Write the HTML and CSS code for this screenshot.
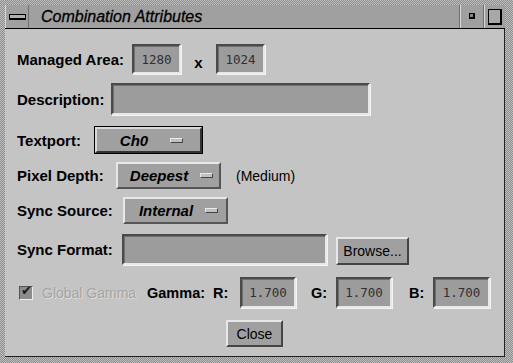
FILE: index.html
```html
<!DOCTYPE html>
<html lang="en">
<head>
  <meta charset="UTF-8">
  <title>Combination Attributes</title>
  <link rel="stylesheet" href="styles.css">
</head>
<body>
  <div class="window">
    <!-- Title bar -->
    <div class="titlebar">
      <div class="tb-btn tb-menu"><span class="menu-bar"></span></div>
      <div class="tb-title">Combination Attributes</div>
      <div class="tb-btn tb-min"><span class="dot"></span></div>
      <div class="tb-btn tb-max"><span class="square"></span></div>
    </div>

    <div class="content">
      <div class="row row-area">
        <span class="label" style="width:115px">Managed Area:</span>
        <span class="field w49">1280</span>
        <span class="times">x</span>
        <span class="field w49">1024</span>
      </div>

      <div class="row row-desc">
        <span class="label" style="width:94px">Description:</span>
        <span class="field desc-field"></span>
      </div>

      <div class="row row-textport">
        <span class="label" style="width:78px">Textport:</span>
        <button class="option focused">Ch0 <span class="indicator"></span></button>
      </div>

      <div class="row row-depth">
        <span class="label" style="width:99px">Pixel Depth:</span>
        <button class="option">Deepest <span class="indicator"></span></button>
        <span class="note">(Medium)</span>
      </div>

      <div class="row row-sync">
        <span class="label" style="width:106px">Sync Source:</span>
        <button class="option">Internal <span class="indicator"></span></button>
      </div>

      <div class="row row-format">
        <span class="label" style="width:105px">Sync Format:</span>
        <span class="field format-field"></span>
        <button class="push browse">Browse...</button>
      </div>

      <div class="row row-gamma">
        <span class="checkbox"><span class="check">&#10004;</span></span>
        <span class="disabled">Global Gamma</span>
        <span class="label gamma-label">Gamma:</span>
        <span class="label chan">R:</span>
        <span class="field gfield">1.700</span>
        <span class="label chan chan-g">G:</span>
        <span class="field gfield">1.700</span>
        <span class="label chan chan-b">B:</span>
        <span class="field gfield">1.700</span>
      </div>

      <div class="row row-close">
        <button class="push close">Close</button>
      </div>
    </div>
  </div>
</body>
</html>
```

FILE: styles.css
```css
/* General */
body {
  margin: 0;
  background: #c4c4c4;
  font-family: 'Liberation Sans', Arial, sans-serif;
}

.window {
  width: 513px;
  height: 363px;
  box-sizing: border-box;
  padding: 5px 8px 6px 5px;
  background: repeating-conic-gradient(#8c8c8c 0 25%, #c0c0c0 0 50%) 0 0 / 2px 2px;
  display: flex;
  flex-direction: column;
}

/* Title bar */
.titlebar {
  height: 23px;
  display: flex;
  background: #a0a0a0;
  border-bottom: 1px solid #000;
}

.tb-btn {
  display: flex;
  align-items: center;
  justify-content: center;
  box-sizing: border-box;
  border-left: 1px solid #d8d8d8;
  border-right: 1px solid #707070;
}

.tb-menu {
  width: 24px;
}

.menu-bar {
  width: 15px;
  height: 3px;
  border: 1px solid #000;
  border-bottom-width: 2px;
  background: #b0b0b0;
}

.tb-title {
  flex: 1;
  padding-left: 12px;
  font-size: 16px;
  font-style: italic;
  line-height: 23px;
  color: #000;
  -webkit-text-stroke: 0.3px #000;
}

.tb-min {
  width: 25px;
  border-left: 1px solid #707070;
  box-shadow: inset 1px 0 #d8d8d8;
}

.dot {
  width: 3px;
  height: 3px;
  border: 1px solid #000;
  border-right-width: 2px;
  border-bottom-width: 2px;
  background: #888;
  margin-top: -1px;
}

.tb-max {
  width: 21px;
  border-right: none;
}

.square {
  width: 11px;
  height: 13px;
  border: 1px solid #000;
  border-right-width: 2px;
  border-bottom-width: 2px;
  background: #a8a8a8;
}

/* Content area */
.content {
  flex: 1;
  background: #c4c4c4;
  border-right: 1px solid #222;
  border-bottom: 1px solid #222;
  padding: 15px 0 0 12px;
  box-sizing: border-box;
}

.row {
  display: flex;
  align-items: center;
}

.row-area { height: 30px; }
.row-desc { height: 32px; margin-top: 9px; }
.row-textport { height: 26px; margin-top: 12px; }
.row-depth { height: 27px; margin-top: 9px; }
.row-sync { height: 27px; margin-top: 8px; }
.row-format { height: 31px; margin-top: 10px; }
.row-gamma { height: 31px; margin-top: 12px; }
.row-close { height: 27px; margin-top: 12px; justify-content: center; padding-right: 12px; }

.label {
  flex: none;
  font-size: 15px;
  font-weight: bold;
  color: #000;
}

/* Text fields */
.field {
  box-sizing: border-box;
  height: 100%;
  display: flex;
  align-items: center;
  justify-content: center;
  background: #9c9c9c;
  border: 2px solid;
  border-color: #4a4a4a #e8e8e8 #e8e8e8 #4a4a4a;
  box-shadow: inset 1px 1px #707070, 1px 1px #f4f4f4;
  font-family: 'DejaVu Sans Mono', monospace;
  font-size: 12.5px;
  color: #303030;
}

.w49 { width: 49px; }

.times {
  width: 35px;
  text-align: center;
  font-size: 15px;
  font-weight: bold;
  padding-top: 6px;
}

.desc-field { width: 259px; }
.format-field { width: 205px; }
.gfield { width: 56px; }

/* Option menus */
.option {
  box-sizing: border-box;
  width: 105px;
  height: 100%;
  display: flex;
  align-items: center;
  justify-content: center;
  gap: 12px;
  padding: 0 0 0 6px;
  background: #a0a0a0;
  border: 2px solid;
  border-color: #e8e8e8 #555 #555 #e8e8e8;
  font-family: 'Liberation Sans', Arial, sans-serif;
  font-size: 15px;
  font-weight: bold;
  font-style: italic;
  color: #000;
}

.option.focused {
  width: 107px;
  outline: 1px solid #000;
  border-color: #d8d8d8 #333 #333 #d8d8d8;
  gap: 22px;
}

.indicator {
  width: 11px;
  height: 3px;
  background: #c0c0c0;
  border: 1px solid;
  border-color: #e8e8e8 #444 #444 #e8e8e8;
}

.note {
  margin-left: 15px;
  font-size: 14px;
  color: #000;
}

/* Push buttons */
.push {
  box-sizing: border-box;
  height: 28px;
  background: #a0a0a0;
  border: 2px solid;
  border-color: #e8e8e8 #444 #444 #e8e8e8;
  font-family: 'Liberation Sans', Arial, sans-serif;
  font-size: 14px;
  color: #000;
  padding: 0;
}

.browse {
  width: 73px;
  margin-left: 9px;
  align-self: flex-end;
}

.close {
  width: 57px;
  height: 27px;
}

/* Gamma row */
.checkbox {
  position: relative;
  width: 14px;
  height: 14px;
  box-sizing: border-box;
  margin-left: 2px;
  background: #8c8c8c;
  border: 1px solid;
  border-color: #555 #eee #eee #555;
}

.check {
  position: absolute;
  left: 1px;
  top: -4px;
  font-family: 'DejaVu Sans', sans-serif;
  font-size: 13px;
  color: #1a1a1a;
}

.disabled {
  margin-left: 9px;
  width: 105px;
  font-size: 14px;
  color: #a4a4a4;
  text-shadow: 1px 1px #dcdcdc;
}

.row-gamma .label { font-size: 14.5px; }
.gamma-label { width: 66px; }
.chan { width: 27px; }
.chan-g { margin-left: 15px; width: 25px; }
.chan-b { margin-left: 17px; width: 24px; }
.row-gamma .gfield:last-child { width: 57px; }
```
